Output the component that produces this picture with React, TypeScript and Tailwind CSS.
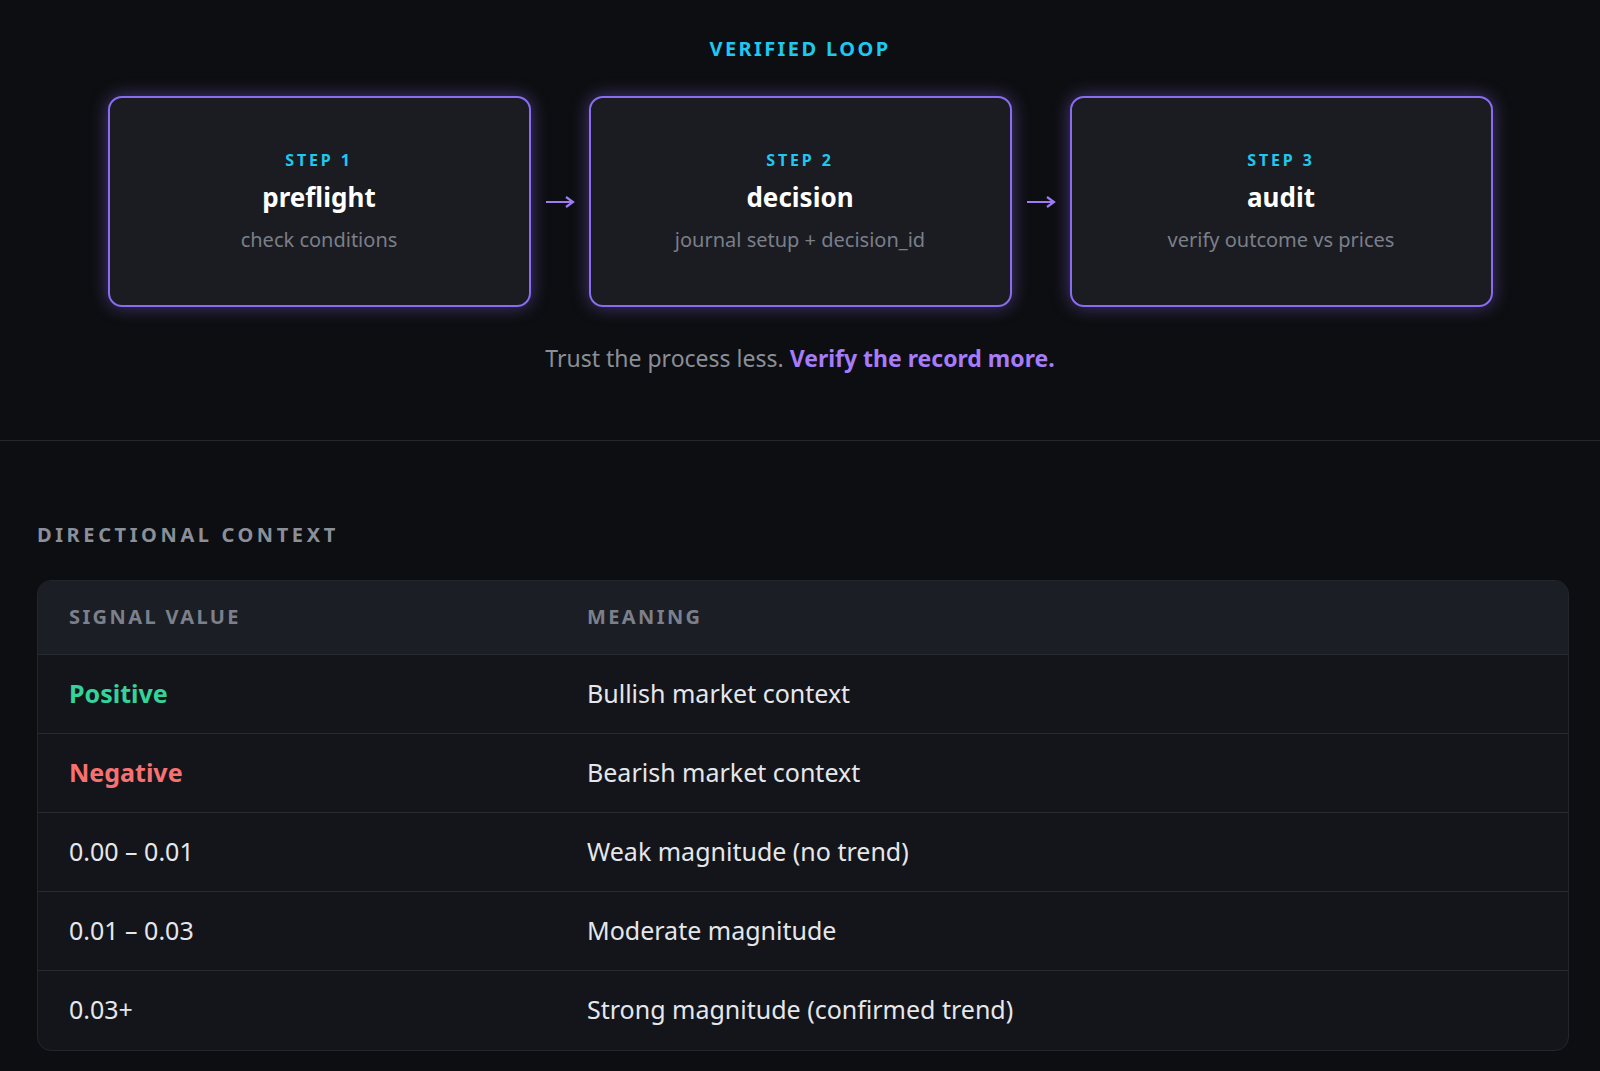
export default function App() {
  const steps = [
    { n: 1, t: "preflight", d: "check conditions" },
    { n: 2, t: "decision", d: "journal setup + decision_id" },
    { n: 3, t: "audit", d: "verify outcome vs prices" },
  ];
  const rows = [
    { v: "Positive", c: "text-[#34d399] font-bold", m: "Bullish market context" },
    { v: "Negative", c: "text-[#f87171] font-bold", m: "Bearish market context" },
    { v: "0.00 – 0.01", c: "text-[#e5e7eb]", m: "Weak magnitude (no trend)" },
    { v: "0.01 – 0.03", c: "text-[#e5e7eb]", m: "Moderate magnitude" },
    { v: "0.03+", c: "text-[#e5e7eb]", m: "Strong magnitude (confirmed trend)" },
  ];
  return (
    <div className="min-h-[1071px] w-full bg-[#0d0e11] font-['Liberation_Sans']">
      <div className="bg-[#0d0e11] pt-[34px] pb-[64px] border-b border-[#25272d]">
        <div className="text-center text-[#1ec8f0] text-[20px] font-bold tracking-[0.12em]">VERIFIED LOOP</div>
        <div className="mt-[32px] flex items-center justify-center gap-[14px]">
          {steps.map((s, i) => (
            <div key={s.n} className="flex items-center gap-[14px]">
              {i > 0 && (
                <svg width="30" height="14" viewBox="0 0 30 14" className="text-[#9d7cf5]">
                  <path d="M1 7h27M21 2l7 5-7 5" fill="none" stroke="currentColor" strokeWidth="2.2" />
                </svg>
              )}
              <div className="w-[423px] h-[211px] rounded-[14px] border-2 border-[#8b6cf0] bg-[#1a1c22] shadow-[0_0_18px_rgba(139,108,240,0.45)] flex flex-col items-center justify-center">
                <div className="text-[#1ec8f0] text-[16px] font-bold tracking-[0.18em]">STEP {s.n}</div>
                <div className="mt-[6px] text-white text-[26px] font-bold">{s.t}</div>
                <div className="mt-[8px] text-[#7b7f89] text-[20px]">{s.d}</div>
              </div>
            </div>
          ))}
        </div>
        <div className="mt-[34px] text-center text-[23px] text-[#8a8e98]">
          Trust the process less. <span className="text-[#a67cfa] font-bold">Verify the record more.</span>
        </div>
      </div>
      <div className="pl-[37px] pr-[31px] pt-[79px] pb-[30px]">
        <div className="text-[#8a8f99] text-[20px] font-bold tracking-[0.18em]">DIRECTIONAL CONTEXT</div>
        <div className="mt-[30px] rounded-[14px] border border-[#23262d] bg-[#13151a] overflow-hidden">
          <div className="grid grid-cols-[518px_1fr] h-[74px] items-center bg-[#1b1e25] border-b border-[#272a31] px-[31px] text-[20px] font-bold tracking-[0.12em] text-[#7c808b]">
            <div>SIGNAL VALUE</div>
            <div>MEANING</div>
          </div>
          {rows.map((r, i) => (
            <div key={r.v} className={`grid grid-cols-[518px_1fr] h-[79px] items-center px-[31px] text-[25px] ${i < rows.length - 1 ? "border-b border-[#272a31]" : ""}`}>
              <div className={r.c}>{r.v}</div>
              <div className="text-[#e5e7eb]">{r.m}</div>
            </div>
          ))}
        </div>
      </div>
    </div>
  );
}
